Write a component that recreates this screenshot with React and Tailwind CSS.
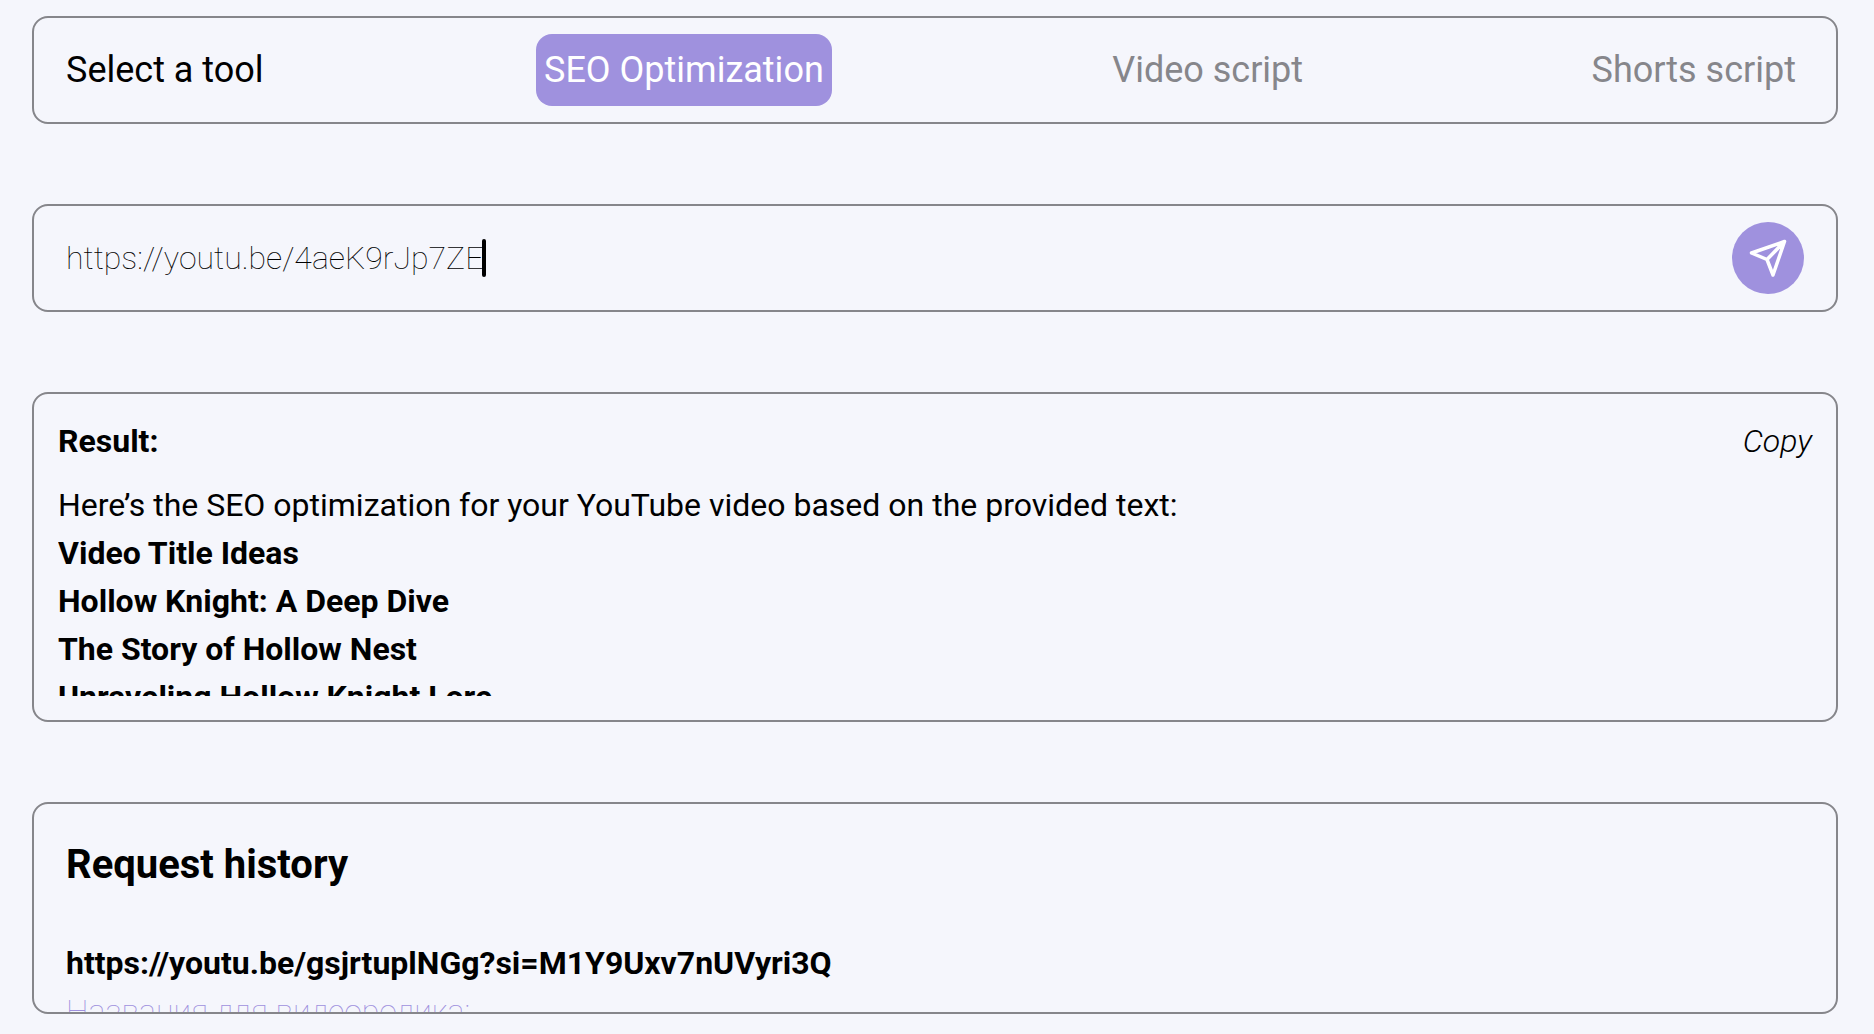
import { useState } from "react";

const tools = ["SEO Optimization", "Video script", "Shorts script"];

const resultLines = [
  "Video Title Ideas",
  "Hollow Knight: A Deep Dive",
  "The Story of Hollow Nest",
  "Unraveling Hollow Knight Lore",
];

const panel = "rounded-2xl border-2 border-[#86868b]";

export default function App() {
  const [tool, setTool] = useState(tools[0]);
  const [url, setUrl] = useState("https://youtu.be/4aeK9rJp7ZE");

  return (
    <main className="flex min-h-screen flex-col gap-20 bg-[#f5f6fc] pt-4 pr-9 pb-5 pl-8 font-['Roboto',sans-serif] text-[32px] leading-[48px] text-black">
      <nav className={`${panel} flex items-center justify-between px-8 py-4 text-[36px]`}>
        <span>Select a tool</span>
        {tools.map((name) => (
          <button
            key={name}
            type="button"
            onClick={() => setTool(name)}
            className={`h-[72px] rounded-2xl px-2 ${name === tool ? "bg-[#9f91de] text-white" : "text-[#86868b]"}`}
          >
            {name}
          </button>
        ))}
      </nav>

      <form className={`${panel} flex items-center px-8 py-4`} onSubmit={(e) => e.preventDefault()}>
        <div className="relative flex flex-1 items-center">
          <input
            aria-label="Video link"
            value={url}
            onChange={(e) => setUrl(e.target.value)}
            className="w-full bg-transparent font-thin outline-none"
          />
          <span className="pointer-events-none absolute left-0 flex items-center" aria-hidden="true">
            <span className="invisible font-thin">{url}</span>
            <span className="-ml-px h-[38px] w-1 rounded-sm bg-black" />
          </span>
        </div>
        <button
          type="submit"
          aria-label="Send"
          className="flex size-[72px] items-center justify-center rounded-full bg-[#9f91de] text-white"
        >
          <svg viewBox="0 0 72 72" className="size-[72px]" fill="none" stroke="currentColor" strokeWidth="3.5" strokeLinecap="round" strokeLinejoin="round">
            <path d="M52.5 19.5 19.5 31l15.5 6.5 6 15.5ZM52.5 19.5 35 37.5" />
          </svg>
        </button>
      </form>

      <section className={`${panel} flex flex-col gap-4 px-6 pt-[23px] pb-6`}>
        <div className="flex items-center justify-between">
          <h2 className="font-bold">Result:</h2>
          <button type="button" className="font-light italic">Copy</button>
        </div>
        <div className="h-[215px] overflow-hidden">
          <p>Here’s the SEO optimization for your YouTube video based on the provided text:</p>
          {resultLines.map((line) => (
            <p key={line} className="font-bold">{line}</p>
          ))}
        </div>
      </section>

      <section className={`${panel} h-[212px] overflow-hidden px-8 pt-[33px]`}>
        <h2 className="mb-[46px] text-[40px] leading-[56px] font-bold">Request history</h2>
        <h3 className="font-bold">https://youtu.be/gsjrtuplNGg?si=M1Y9Uxv7nUVyri3Q</h3>
        <p className="font-thin text-[#9f91de]">Названия для видеоролика:</p>
      </section>
    </main>
  );
}
